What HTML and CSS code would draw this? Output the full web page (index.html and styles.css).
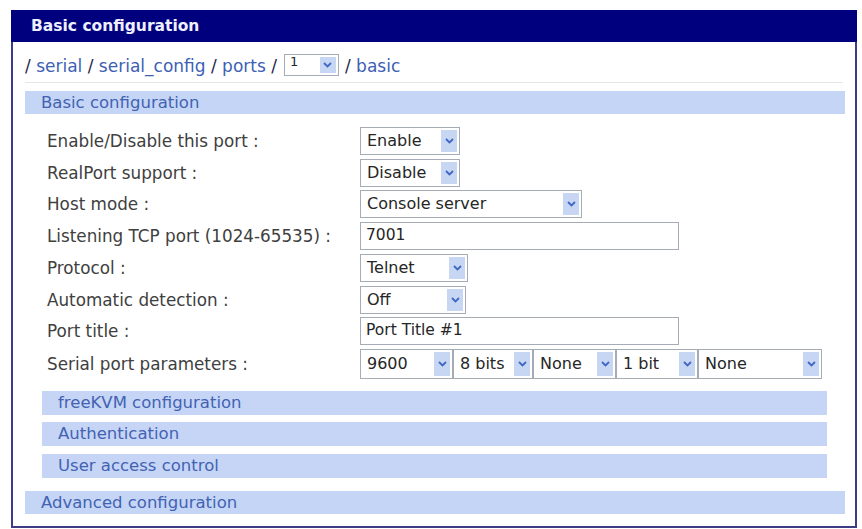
FILE: index.html
```html
<!DOCTYPE html>
<html>
<head>
<meta charset="utf-8">
<link rel="stylesheet" href="styles.css">
</head>
<body>
<div class="panel">
  <div class="panel-head">Basic configuration</div>
  <div class="panel-body">
    <div class="crumbs">
      <span class="sep">/ </span><a class="crumb">serial</a><span class="sep"> / </span><a class="crumb">serial_config</a><span class="sep"> / </span><a class="crumb">ports</a><span class="sep"> /</span>
      <div class="sel mini"><span class="val">1</span><span class="arrow"><svg width="9" height="6" viewBox="0 0 9 6"><path d="M1 1 L4.5 4.5 L8 1" fill="none" stroke="#3f68c4" stroke-width="1.8"/></svg></span></div>
      <span class="sep">/ </span><a class="crumb">basic</a>
    </div>

    <div class="bar">Basic configuration</div>

    <div class="form">
      <div class="row">
        <span class="label">Enable/Disable this port :</span>
        <div class="sel w-enable"><span class="val">Enable</span><span class="arrow"><svg width="9" height="6" viewBox="0 0 9 6"><path d="M1 1 L4.5 4.5 L8 1" fill="none" stroke="#3f68c4" stroke-width="1.8"/></svg></span></div>
      </div>
      <div class="row">
        <span class="label">RealPort support :</span>
        <div class="sel w-enable"><span class="val">Disable</span><span class="arrow"><svg width="9" height="6" viewBox="0 0 9 6"><path d="M1 1 L4.5 4.5 L8 1" fill="none" stroke="#3f68c4" stroke-width="1.8"/></svg></span></div>
      </div>
      <div class="row">
        <span class="label">Host mode :</span>
        <div class="sel w-host"><span class="val">Console server</span><span class="arrow"><svg width="9" height="6" viewBox="0 0 9 6"><path d="M1 1 L4.5 4.5 L8 1" fill="none" stroke="#3f68c4" stroke-width="1.8"/></svg></span></div>
      </div>
      <div class="row row-inp">
        <span class="label">Listening TCP port (1024-65535) :</span>
        <div class="inp">7001</div>
      </div>
      <div class="row">
        <span class="label">Protocol :</span>
        <div class="sel w-proto"><span class="val">Telnet</span><span class="arrow"><svg width="9" height="6" viewBox="0 0 9 6"><path d="M1 1 L4.5 4.5 L8 1" fill="none" stroke="#3f68c4" stroke-width="1.8"/></svg></span></div>
      </div>
      <div class="row">
        <span class="label">Automatic detection :</span>
        <div class="sel w-auto"><span class="val">Off</span><span class="arrow"><svg width="9" height="6" viewBox="0 0 9 6"><path d="M1 1 L4.5 4.5 L8 1" fill="none" stroke="#3f68c4" stroke-width="1.8"/></svg></span></div>
      </div>
      <div class="row row-inp">
        <span class="label">Port title :</span>
        <div class="inp">Port Title #1</div>
      </div>
      <div class="row">
        <span class="label">Serial port parameters :</span>
        <div class="group">
          <div class="sel w-baud"><span class="val">9600</span><span class="arrow"><svg width="9" height="6" viewBox="0 0 9 6"><path d="M1 1 L4.5 4.5 L8 1" fill="none" stroke="#3f68c4" stroke-width="1.8"/></svg></span></div>
          <div class="sel w-bits"><span class="val">8 bits</span><span class="arrow"><svg width="9" height="6" viewBox="0 0 9 6"><path d="M1 1 L4.5 4.5 L8 1" fill="none" stroke="#3f68c4" stroke-width="1.8"/></svg></span></div>
          <div class="sel w-par"><span class="val">None</span><span class="arrow"><svg width="9" height="6" viewBox="0 0 9 6"><path d="M1 1 L4.5 4.5 L8 1" fill="none" stroke="#3f68c4" stroke-width="1.8"/></svg></span></div>
          <div class="sel w-stop"><span class="val">1 bit</span><span class="arrow"><svg width="9" height="6" viewBox="0 0 9 6"><path d="M1 1 L4.5 4.5 L8 1" fill="none" stroke="#3f68c4" stroke-width="1.8"/></svg></span></div>
          <div class="sel w-flow"><span class="val">None</span><span class="arrow"><svg width="9" height="6" viewBox="0 0 9 6"><path d="M1 1 L4.5 4.5 L8 1" fill="none" stroke="#3f68c4" stroke-width="1.8"/></svg></span></div>
        </div>
      </div>
    </div>

    <div class="subbars">
      <div class="subbar">freeKVM configuration</div>
      <div class="subbar">Authentication</div>
      <div class="subbar">User access control</div>
    </div>

    <div class="bar bar-adv">Advanced configuration</div>
  </div>
</div>
</body>
</html>
```

FILE: styles.css
```css
* { box-sizing: border-box; }

body {
  margin: 0;
  background: #ffffff;
  font-family: "DejaVu Sans", Verdana, sans-serif;
  color: #333333;
}

.panel {
  margin: 10px 0 0 11px;
  width: 846px;
}

.panel-head {
  height: 32px;
  background: #00007e;
  color: #eef0ff;
  font-weight: bold;
  font-size: 15.5px;
  line-height: 32px;
  padding-left: 20px;
}

.panel-body {
  height: 486px;
  border: 2px solid #3d3d86;
  border-top: none;
  padding: 0 10px 12px 12px;
}

.crumbs {
  height: 41px;
  border-bottom: 1px solid #e6e6ea;
  display: flex;
  align-items: flex-end;
  padding-bottom: 6px;
  font-size: 17px;
  line-height: 20px;
  margin-right: 2px;
}

.crumbs span, .crumbs a { white-space: pre; }

.crumb { color: #3d5fb4; }
.sep { color: #26264e; }

.bar {
  margin-top: 8px;
  height: 23px;
  background: #c5d5f6;
  color: #4262b2;
  font-size: 16.5px;
  line-height: 23px;
  padding-left: 16px;
}

.form {
  margin-top: 13px;
  padding-left: 22px;
}

.row {
  display: flex;
  align-items: center;
  height: 28px;
  margin-bottom: 3.5px;
}

.row-inp {
  margin-top: 1px;
  margin-bottom: 4.5px;
}

.label {
  width: 313px;
  font-size: 16.8px;
  color: #404040;
}

.sel {
  position: relative;
  height: 28px;
  border: 1px solid #a6acb6;
  background: #ffffff;
  font-size: 16px;
  color: #262626;
  padding-left: 6px;
  line-height: 25px;
}

.sel .arrow {
  position: absolute;
  top: 2px;
  bottom: 2px;
  right: 2px;
  width: 16px;
  background: #c7d6f2;
  display: flex;
  align-items: center;
  justify-content: center;
}

.sel.mini {
  width: 55px;
  height: 22px;
  font-size: 13px;
  line-height: 14px;
  padding-left: 5px;
  margin: 0 6px 0 7px;
  flex: none;
}

.w-enable { width: 100px; }
.w-host { width: 222px; }
.w-proto { width: 108px; }
.w-auto { width: 106px; }

.group { display: flex; }
.group .sel { height: 30px; line-height: 27px; }
.w-baud { width: 93px; }
.w-bits { width: 80px; }
.w-par { width: 83px; }
.w-stop { width: 82px; }
.w-flow { width: 124px; }

.inp {
  width: 319px;
  height: 28px;
  border: 1px solid #a6acb6;
  background: #ffffff;
  font-size: 15.5px;
  color: #262626;
  padding-left: 5px;
  line-height: 25px;
}

.subbars {
  margin: 13px 18px 0 17px;
  display: flex;
  flex-direction: column;
  gap: 7.5px;
}

.subbar {
  height: 24px;
  background: #c6d5f6;
  color: #4262b2;
  font-size: 16.5px;
  line-height: 24px;
  padding-left: 16px;
}

.bar-adv {
  margin-top: 13px;
}
```
